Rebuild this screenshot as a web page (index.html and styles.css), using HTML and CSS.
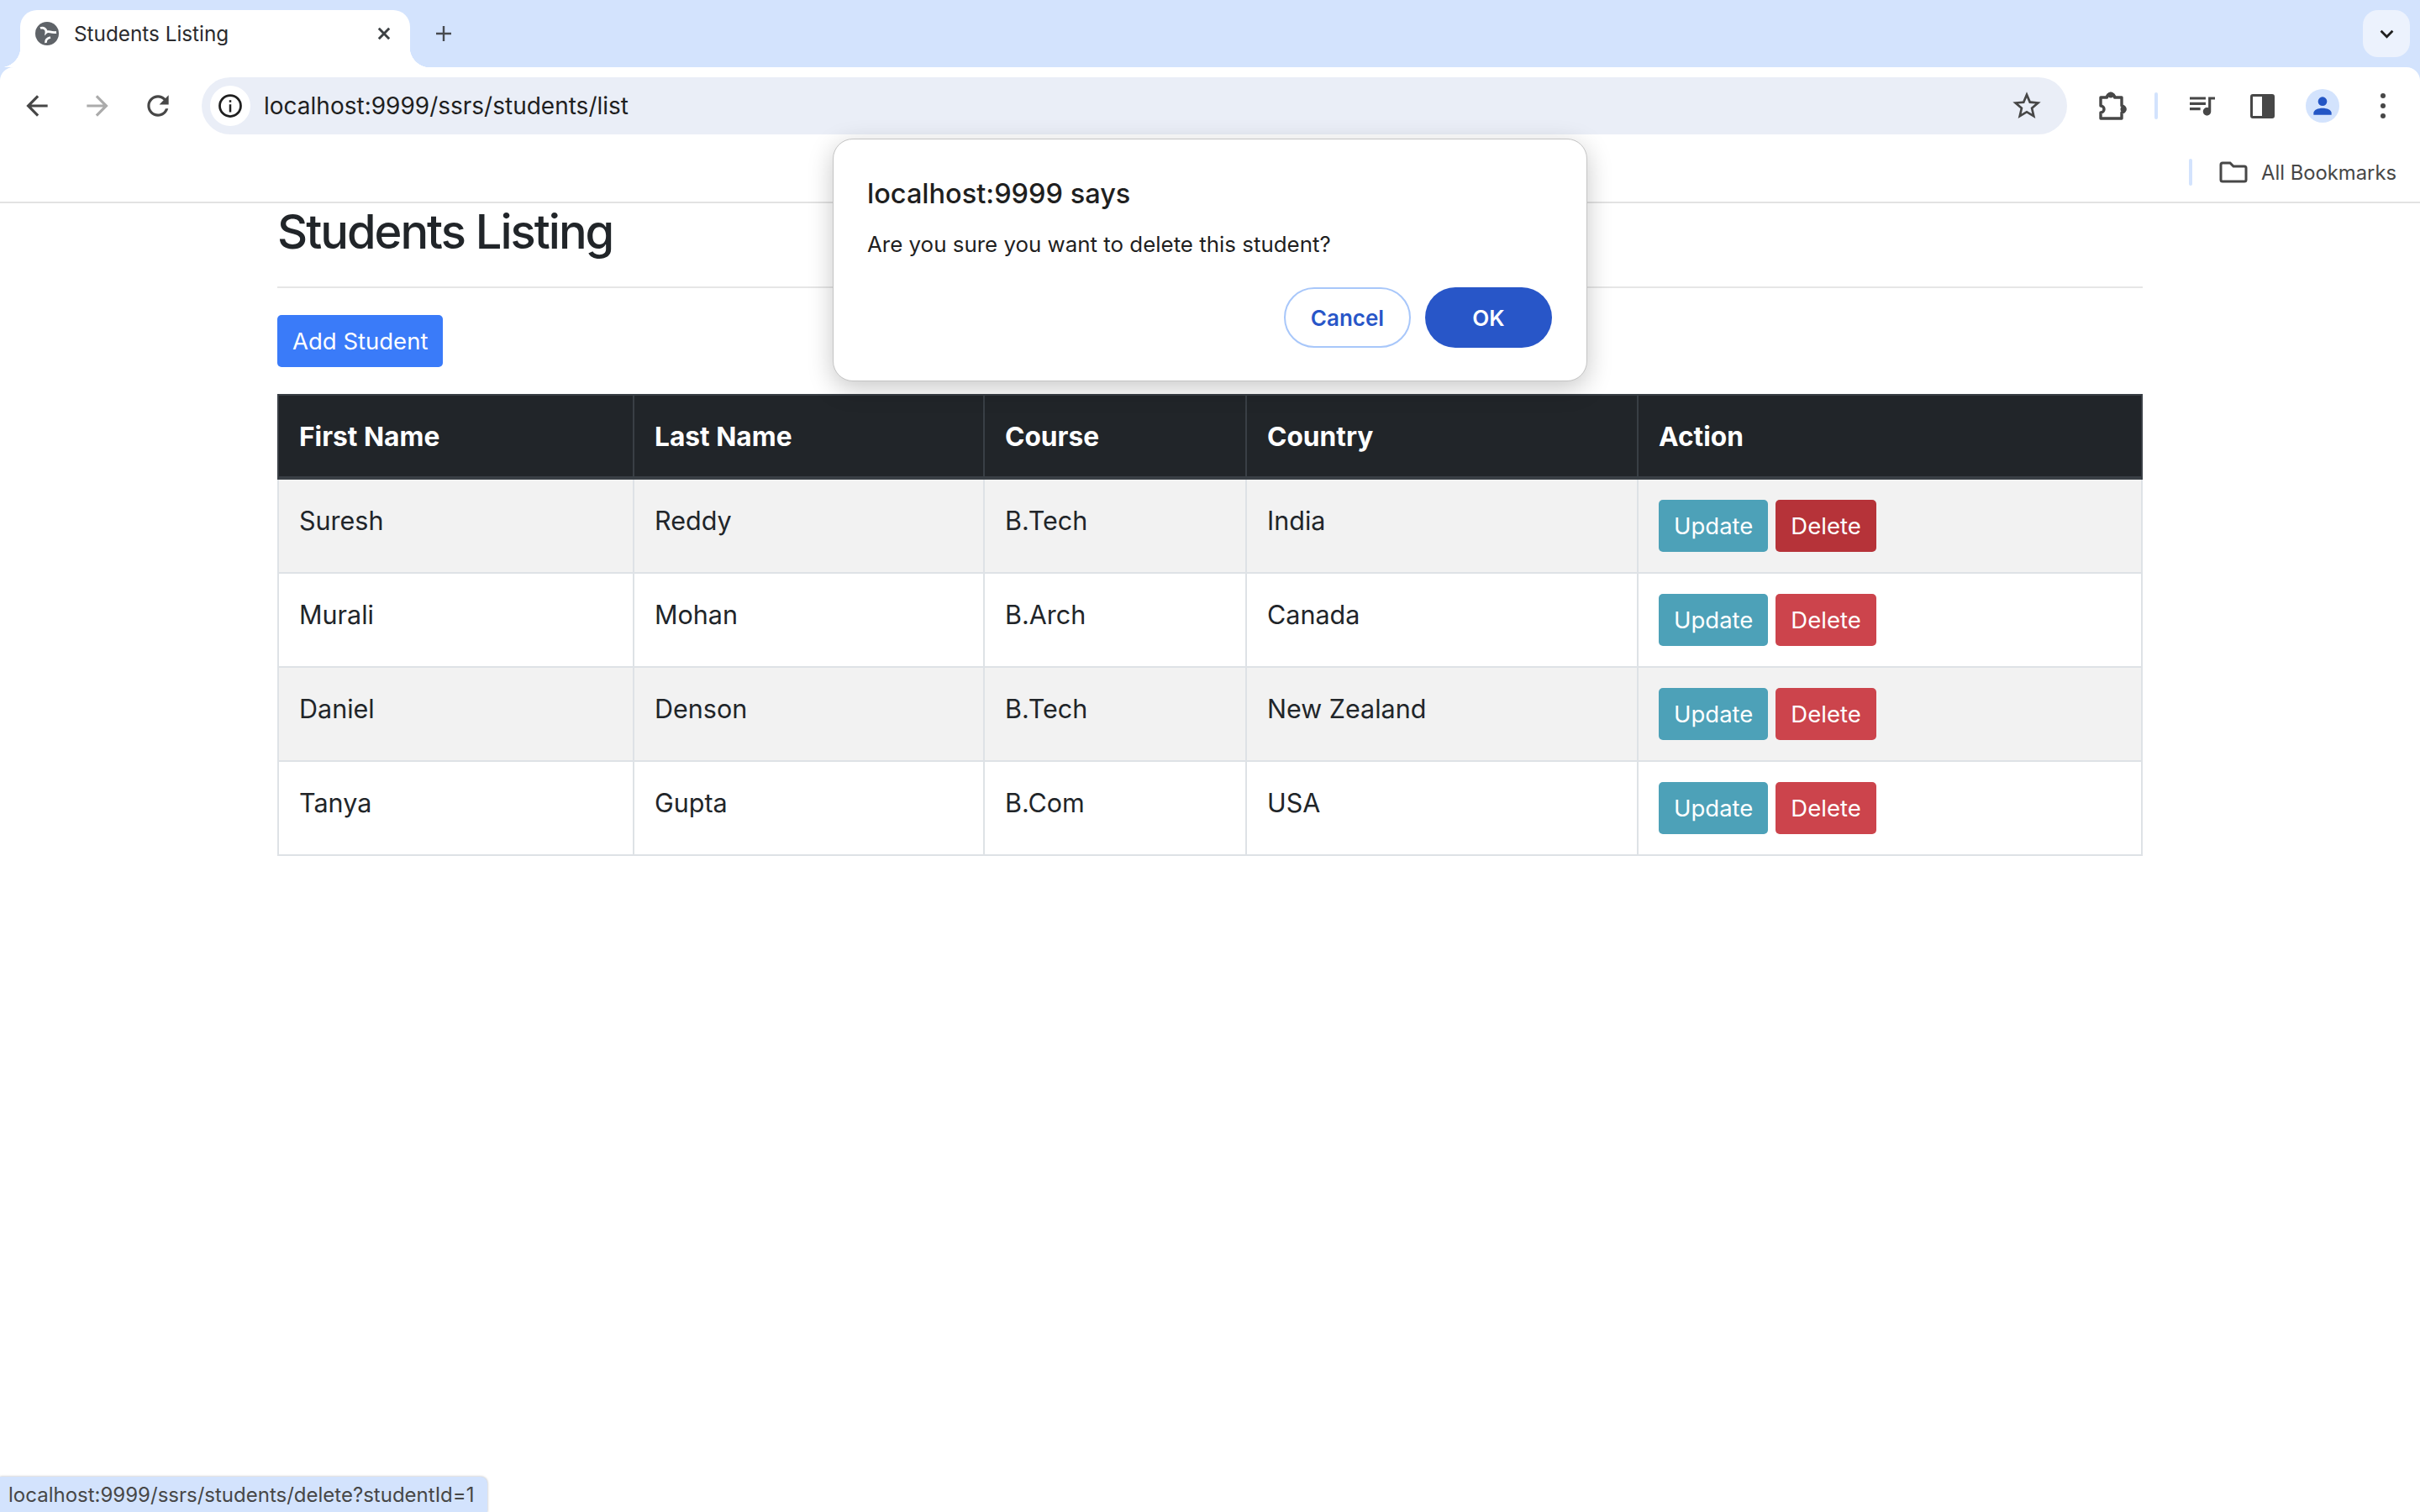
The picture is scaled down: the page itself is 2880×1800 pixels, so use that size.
FILE: index.html
```html
<!DOCTYPE html>
<html lang="en">
<head>
<meta charset="utf-8">
<title>Students Listing</title>
<link rel="stylesheet" href="styles.css">
</head>
<body>
<header class="chrome">
  <div class="tabstrip">
    <div class="tab">
      <svg class="favicon" viewBox="0 0 28 28"><circle class="globe-disc" cx="14" cy="14" r="14"/><path class="globe-land" d="M6 7.500C10 6 13.500 9 13 12.500C15.500 10 18 13.500 25 12.500M12.500 25C12 21 14 19.500 18 18.500"/></svg>
      <span class="tab-title">Students Listing</span>
      <svg class="tab-close" viewBox="0 0 16 16"><path d="M2.500 2.500l11 11M13.500 2.500l-11 11"/></svg>
    </div>
    <svg class="new-tab" viewBox="0 0 20 20"><path d="M10 1v18M1 10h18"/></svg>
    <div class="tab-search"><svg viewBox="0 0 16 10"><path d="M1.500 1.500L8 8l6.500-6.500"/></svg></div>
  </div>
  <div class="toolbar">
    <div class="nav-row">
      <svg class="nav-icon" viewBox="0 0 24 24"><path d="M20 11H7.830l5.590-5.590L12 4l-8 8 8 8 1.410-1.410L7.830 13H20v-2z"/></svg>
      <svg class="nav-icon nav-disabled" viewBox="0 0 24 24"><path d="M12 4l-1.410 1.410L16.170 11H4v2h12.170l-5.580 5.590L12 20l8-8z"/></svg>
      <svg class="nav-icon" viewBox="0 0 24 24"><path d="M17.650 6.350C16.200 4.900 14.210 4 12 4c-4.420 0-7.990 3.580-7.990 8s3.570 8 7.990 8c3.730 0 6.840-2.550 7.730-6h-2.080c-.82 2.330-3.040 4-5.650 4-3.310 0-6-2.690-6-6s2.690-6 6-6c1.660 0 3.140.69 4.220 1.780L13 11h7V4l-2.350 2.350z"/></svg>
      <div class="omnibox">
        <span class="site-info"><svg viewBox="0 0 24 24"><circle class="info-ring" cx="12" cy="12" r="10"/><path d="M11 10.500h2V18h-2zM11 6.500h2v2h-2z"/></svg></span>
        <span class="url">localhost:9999/ssrs/students/list</span>
        <svg class="star" viewBox="0 0 24 24"><path d="M22 9.240l-7.190-.62L12 2 9.190 8.630 2 9.240l5.460 4.730L5.820 21 12 17.270 18.180 21l-1.630-7.030L22 9.240zM12 15.400l-3.760 2.270 1-4.280-3.320-2.880 4.380-.38L12 6.100l1.710 4.040 4.380.38-3.320 2.880 1 4.280L12 15.400z"/></svg>
      </div>
      <svg class="tool-puzzle" viewBox="0 0 36 36"><path d="M4 8h7.500a4.500 4.500 0 0 1 9 0H29v10a4 4 0 0 1 0 8v7H4v-7a4 4 0 0 0 0-8z"/><circle class="knob" cx="16" cy="5" r="3.500"/><circle class="knob" cx="31" cy="22" r="3.500"/></svg>
      <span class="divider"></span>
      <svg class="tool-queue" viewBox="3 6 19 14"><path d="M15 6H3v2h12V6zm0 4H3v2h12v-2zM3 16h8v-2H3v2zM17 6v8.180c-.31-.11-.65-.18-1-.18-1.660 0-3 1.340-3 3s1.340 3 3 3 3-1.340 3-3V8h3V6h-5z"/></svg>
      <span class="tool-panel"><span class="panel-fill"></span></span>
      <span class="avatar"><svg viewBox="0 0 24 24"><circle cx="12" cy="8" r="4"/><path d="M4 20v-1.500C4 15.500 8 14 12 14s8 1.500 8 4.500V20z"/></svg></span>
      <span class="kebab"><i></i><i></i><i></i></span>
    </div>
    <div class="bookmarks-row">
      <span class="divider"></span>
      <svg class="folder" viewBox="0 0 34 26"><path d="M2 4a2 2 0 0 1 2-2h9l4 4h13a2 2 0 0 1 2 2v14a2 2 0 0 1-2 2H4a2 2 0 0 1-2-2z"/></svg>
      <span class="bookmarks-label">All Bookmarks</span>
    </div>
  </div>
</header>

<main class="container">
  <h1 class="page-title">Students Listing</h1>
  <hr class="rule">
  <a class="btn btn-primary" href="#">Add Student</a>
  <table class="students">
    <colgroup>
      <col class="col-first"><col class="col-last"><col class="col-course"><col class="col-country"><col>
    </colgroup>
    <thead>
      <tr><th>First Name</th><th>Last Name</th><th>Course</th><th>Country</th><th>Action</th></tr>
    </thead>
    <tbody>
      <tr><td>Suresh</td><td>Reddy</td><td>B.Tech</td><td>India</td><td><div class="actions"><a class="btn btn-info" href="#">Update</a><a class="btn btn-danger btn-active" href="#">Delete</a></div></td></tr>
      <tr><td>Murali</td><td>Mohan</td><td>B.Arch</td><td>Canada</td><td><div class="actions"><a class="btn btn-info" href="#">Update</a><a class="btn btn-danger" href="#">Delete</a></div></td></tr>
      <tr><td>Daniel</td><td>Denson</td><td>B.Tech</td><td>New Zealand</td><td><div class="actions"><a class="btn btn-info" href="#">Update</a><a class="btn btn-danger" href="#">Delete</a></div></td></tr>
      <tr><td>Tanya</td><td>Gupta</td><td>B.Com</td><td>USA</td><td><div class="actions"><a class="btn btn-info" href="#">Update</a><a class="btn btn-danger" href="#">Delete</a></div></td></tr>
    </tbody>
  </table>
</main>

<div class="dialog" role="dialog">
  <div class="dialog-title">localhost:9999 says</div>
  <div class="dialog-message">Are you sure you want to delete this student?</div>
  <div class="dialog-actions">
    <button class="dlg-btn dlg-cancel">Cancel</button>
    <button class="dlg-btn dlg-ok">OK</button>
  </div>
</div>

<div class="status-bubble">localhost:9999/ssrs/students/delete?studentId=1</div>
</body>
</html>
```

FILE: styles.css
```css
* { box-sizing: border-box; }
html, body { margin: 0; padding: 0; }
body {
  width: 2880px;
  height: 1800px;
  overflow: hidden;
  position: relative;
  background: #fff;
  font-family: Inter, "Liberation Sans", sans-serif;
  color: #212529;
}

/* Browser chrome */
.chrome { background: #d3e3fd; }
.tabstrip {
  height: 80px;
  display: flex;
  align-items: flex-start;
  padding: 12px 12px 0 24px;
}
.tab {
  position: relative;
  width: 464px;
  height: 68px;
  background: #fff;
  border-radius: 20px 20px 0 0;
  display: flex;
  align-items: center;
  padding: 0 22px 12px 18px;
}
.tab::before, .tab::after {
  content: "";
  position: absolute;
  bottom: 0;
  width: 24px;
  height: 24px;
}
.tab::before { left: -24px; background: radial-gradient(circle at 0 0, transparent 24px, #fff 24.5px); }
.tab::after { right: -24px; background: radial-gradient(circle at 100% 0, transparent 24px, #fff 24.5px); }
.favicon { width: 28px; height: 28px; flex: none; }
.globe-disc { fill: #5f6368; }
.globe-land { fill: none; stroke: #fff; stroke-width: 2.800; }
.tab-title { margin-left: 18px; font-size: 24.3px; color: #2a2b2e; flex: 1; }
.tab-close { width: 18px; height: 18px; fill: none; stroke: #3c4043; stroke-width: 2.600; }
.new-tab { width: 20px; height: 20px; margin: 18px 0 0 30px; fill: none; stroke: #474a4f; stroke-width: 2.400; }
.tab-search {
  width: 56px;
  height: 56px;
  margin-left: auto;
  border-radius: 18px;
  background: #ecf2fd;
  display: flex;
  align-items: center;
  justify-content: center;
}
.tab-search svg { width: 17px; height: 11px; fill: none; stroke: #1f1f1f; stroke-width: 2.600; }

.toolbar { background: #fff; border-radius: 16px 16px 0 0; border-bottom: 2px solid #e2e2e2; height: 162px; }
.nav-row { height: 92px; display: flex; align-items: center; padding: 12px 0 12px 25px; }
.nav-icon { width: 38px; height: 38px; fill: #474747; margin-right: 34px; flex: none; }
.nav-disabled { fill: #ababab; }
.omnibox {
  width: 2220px;
  height: 68px;
  margin-left: -1px;
  background: #eaeef7;
  border-radius: 34px;
  display: flex;
  align-items: center;
  padding: 0 28px 0 10px;
  flex: none;
}
.site-info {
  width: 48px;
  height: 48px;
  border-radius: 50%;
  background: #fff;
  display: flex;
  align-items: center;
  justify-content: center;
}
.site-info svg { width: 30px; height: 30px; fill: #1f1f1f; }
.info-ring { fill: none; stroke: #1f1f1f; stroke-width: 2.200; }
.url { margin-left: 16px; font-size: 28px; color: #1f1f1f; flex: 1; }
.star { width: 40px; height: 40px; fill: #474747; }
.tool-puzzle { width: 36px; height: 36px; margin-left: 36px; fill: none; stroke: #474747; stroke-width: 3.400; stroke-linejoin: round; flex: none; }
.knob { fill: #474747; stroke: none; }
.divider { width: 4px; height: 32px; border-radius: 2px; background: #d3e3fd; flex: none; }
.nav-row .divider { margin-left: 32px; }
.tool-queue { width: 30px; height: 23px; margin-left: 38px; fill: #474747; flex: none; }
.tool-panel { width: 29px; height: 29px; margin-left: 42px; border: 3px solid #474747; border-radius: 3px; display: flex; justify-content: flex-end; flex: none; }
.panel-fill { width: 12px; background: #474747; }
.avatar { width: 40px; height: 40px; margin-left: 37px; border-radius: 50%; background: #d3e3fd; display: flex; align-items: center; justify-content: center; flex: none; }
.avatar svg { width: 32px; height: 32px; fill: #2456c5; }
.kebab { width: 6px; margin-left: 49px; display: flex; flex-direction: column; gap: 6px; flex: none; }
.kebab i { width: 6px; height: 6px; border-radius: 50%; background: #474747; }
.bookmarks-row { height: 68px; display: flex; align-items: center; padding: 0 28px 2px 0; justify-content: flex-end; }
.folder { width: 34px; height: 26px; margin-left: 32px; fill: none; stroke: #474747; stroke-width: 3; }
.bookmarks-label { margin-left: 16px; font-size: 23.800px; color: #474747; }

/* Page */
.container { width: 2220px; margin: 0 auto; }
.page-title { margin: 0 0 31px; font-size: 56px; line-height: 68px; font-weight: 550; letter-spacing: -2px; color: #212529; }
.rule { margin: 0 0 32px; border: 0; height: 2px; background: #e6e6e6; }
.btn {
  display: inline-block;
  height: 62px;
  padding: 0 18px;
  line-height: 62px;
  font-size: 27.500px;
  color: #fff;
  border-radius: 5px;
  text-decoration: none;
  vertical-align: top;
}
.btn-primary { background: #3a7bf9; margin-bottom: 32px; }
.btn-info { background: #4da1b8; }
.btn-danger { background: #cc444c; }
.btn-active { background: #b63339; }
.actions { display: flex; gap: 9px; }

.students { width: 100%; border-collapse: collapse; table-layout: fixed; font-size: 30.500px; line-height: 49px; }
.col-first { width: 423px; }
.col-last { width: 417px; }
.col-course { width: 312px; }
.col-country { width: 466px; }
.students th, .students td { text-align: left; vertical-align: top; padding: 24px; border: 2px solid #dee2e6; }
.students th { background: #212529; color: #fff; font-weight: 700; font-size: 31.700px; line-height: 45px; border-color: #393f45; height: 99px; padding-top: 26px; border-bottom-width: 4px; }
.students tbody tr:nth-child(odd) td { background: #f2f2f2; }

/* Native confirm dialog */
.dialog {
  position: absolute;
  left: 991px;
  top: 165px;
  width: 898px;
  height: 289px;
  background: #fff;
  border: 1px solid #c4c4c4;
  border-radius: 24px;
  box-shadow: 0 8px 30px rgba(0, 0, 0, .22);
  padding: 45px 41px 0 40px;
}
.dialog-title { font-size: 32.500px; line-height: 40px; font-weight: 500; color: #1f1f1f; }
.dialog-message { margin-top: 22px; font-size: 25.900px; line-height: 36px; color: #1f1f1f; }
.dialog-actions { margin-top: 33px; display: flex; justify-content: flex-end; gap: 17px; }
.dlg-btn { height: 72px; width: 151px; border-radius: 36px; font: 600 26px Inter, "Liberation Sans", sans-serif; }
.dlg-cancel { background: #fff; color: #2856c8; border: 2px solid #a8c7fa; }
.dlg-ok { background: #2856c8; color: #fff; border: 0; }

.status-bubble {
  position: absolute;
  left: 0;
  bottom: 0;
  width: 580px;
  height: 42px;
  background: #d3e3fd;
  border-top-right-radius: 8px;
  box-shadow: 0 0 3px rgba(0, 0, 0, .3);
  padding-left: 10px;
  font-size: 24px;
  line-height: 44px;
  color: #474747;
  white-space: nowrap;
}
```
